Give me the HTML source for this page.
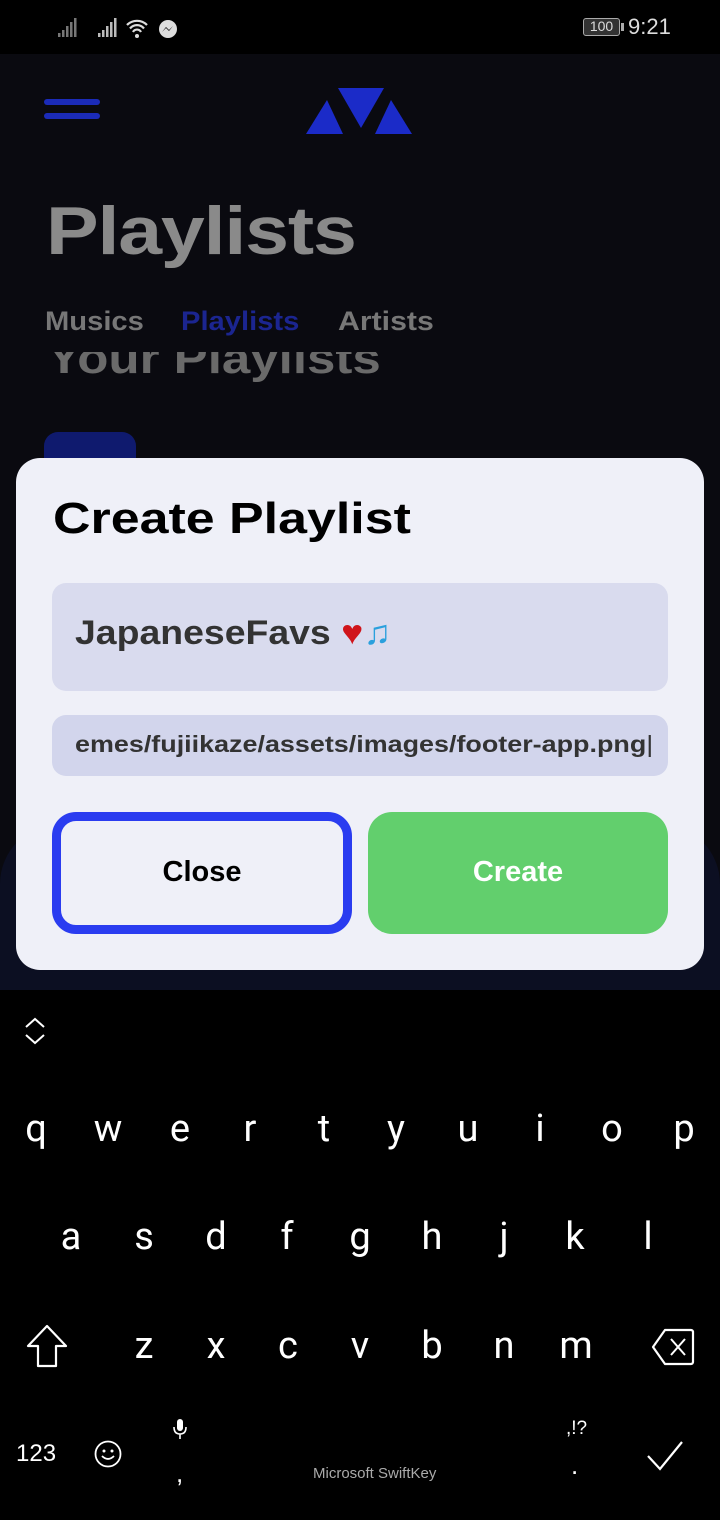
<!DOCTYPE html>
<html><head><meta charset="utf-8"><style>
*{margin:0;padding:0;box-sizing:border-box}
body{width:720px;height:1520px;background:#000;position:relative;overflow:hidden;font-family:"Liberation Sans",sans-serif}
.a{position:absolute}
.s{transform-origin:0 0;white-space:nowrap}
.app{left:0;top:54px;width:720px;height:936px;background:#0a0a10;overflow:hidden}
.k{position:absolute;color:#fff;font-size:38px;width:40px;text-align:center;font-family:"Roboto","Liberation Sans",sans-serif}
</style></head><body>
<div class="a" style="left:0;top:0;width:720px;height:54px;background:#000"></div>
<svg class="a" style="left:56px;top:16px" width="130" height="24" viewBox="0 0 130 24">
<g fill="#777"><rect x="2" y="17" width="2.5" height="4"/><rect x="6" y="14" width="2.5" height="7"/><rect x="10" y="10" width="2.5" height="11"/><rect x="14" y="6" width="2.5" height="15"/><rect x="18" y="2" width="2.5" height="19"/></g>
<g fill="#bbb"><rect x="42" y="17" width="2.5" height="4"/><rect x="46" y="14" width="2.5" height="7"/><rect x="50" y="10" width="2.5" height="11"/><rect x="54" y="6" width="2.5" height="15"/><rect x="58" y="2" width="2.5" height="19"/></g>
<g fill="none" stroke="#ddd" stroke-width="2.2"><path d="M71 9a14 14 0 0 1 20 0"/><path d="M74 12.5a9 9 0 0 1 14 0"/><path d="M77 16a4.5 4.5 0 0 1 8 0"/></g><circle cx="81" cy="20" r="2" fill="#ddd"/>
<circle cx="112" cy="13" r="9" fill="#ddd"/><path d="M106 16l4-5 3 3 4-4-4 5-3-3z" fill="#000"/>
</svg>
<div class="a" style="left:583px;top:18px;width:37px;height:18px;border:1.5px solid #aaa;border-radius:3px;background:#333;color:#ddd;font-size:14px;line-height:15px;text-align:center">100</div>
<div class="a" style="left:621px;top:23px;width:3px;height:8px;background:#aaa"></div>
<div class="a" style="left:628px;top:14px;color:#ddd;font-size:22px">9:21</div>

<div class="a app">
 <div class="a" style="left:44px;top:45px;width:56px;height:6px;border-radius:3px;background:#1b2bb8"></div>
 <div class="a" style="left:44px;top:59px;width:56px;height:6px;border-radius:3px;background:#1b2bb8"></div>
 <svg class="a" style="left:306px;top:32px" width="106" height="48" viewBox="0 0 106 48">
  <path d="M0 48L21 14 37 48z" fill="#1b2bc8"/><path d="M32 2h46L55 42z" fill="#1b2bc8"/><path d="M85 14L106 48 69 48z" fill="#1b2bc8"/>
 </svg>
 <div class="a s" style="left:46px;top:138px;font-size:68px;font-weight:bold;color:#8a8a8a;letter-spacing:-1px;transform:scaleX(1.16)">Playlists</div>
 <div class="a s" style="left:45px;top:252px;font-size:27px;font-weight:bold;color:#777;transform:scaleX(1.08)">Musics</div>
 <div class="a s" style="left:181px;top:252px;font-size:27px;font-weight:bold;color:#1b2590;transform:scaleX(1.08)">Playlists</div>
 <div class="a s" style="left:338px;top:252px;font-size:27px;font-weight:bold;color:#777;transform:scaleX(1.12)">Artists</div>
 <div class="a" style="left:0;top:298px;width:720px;height:48px;overflow:hidden"><div class="a s" style="left:47px;top:-18px;font-size:44px;font-weight:bold;color:#6a6a6a;transform:scaleX(1.16)">Your Playlists</div></div>
 <div class="a" style="left:44px;top:378px;width:92px;height:60px;border-radius:14px;background:#0f1a6e"></div>
 <div class="a" style="left:0;top:770px;width:720px;height:170px;border-radius:60px 60px 0 0;background:#0c0f22"></div>
</div>

<div class="a" style="left:16px;top:458px;width:688px;height:512px;background:#eff0f8;border-radius:24px"></div>
<div class="a s" style="left:53px;top:494px;font-size:44px;font-weight:bold;color:#000;transform:scaleX(1.18)">Create Playlist</div>
<div class="a" style="left:52px;top:583px;width:616px;height:108px;background:#d9dbee;border-radius:14px"></div>
<div class="a s" style="left:75px;top:614px;font-size:34px;font-weight:bold;color:#333;transform:scaleX(1.1)">JapaneseFavs <span style="color:#d0141a">♥</span><span style="color:#2aa0dd">♫</span></div>
<div class="a" style="left:52px;top:715px;width:616px;height:61px;background:#d2d5ec;border-radius:14px;overflow:hidden">
 <div class="a s" style="left:23px;top:16px;font-size:23px;font-weight:bold;color:#333;transform:scaleX(1.17)">emes/fujiikaze/assets/images/footer-app.png<span style="font-weight:normal">|</span></div>
</div>
<div class="a" style="left:52px;top:812px;width:300px;height:122px;border:9px solid #2a3cf0;border-radius:24px;background:#eff0f8"></div>
<div class="a" style="left:52px;top:856px;width:300px;text-align:center;font-size:29px;font-weight:bold;color:#000">Close</div>
<div class="a" style="left:368px;top:812px;width:300px;height:122px;border-radius:24px;background:#62cf6d"></div>
<div class="a" style="left:368px;top:856px;width:300px;text-align:center;font-size:29px;font-weight:bold;color:#fff">Create</div>

<svg class="a" style="left:24px;top:1017px" width="22" height="28" viewBox="0 0 22 28"><path d="M2 10l9-8 9 8M2 18l9 8 9-8" fill="none" stroke="#fff" stroke-width="2"/></svg>
<div class="k" style="left:16px;top:1107px">q</div><div class="k" style="left:88px;top:1107px">w</div><div class="k" style="left:160px;top:1107px">e</div><div class="k" style="left:230px;top:1107px">r</div><div class="k" style="left:304px;top:1107px">t</div><div class="k" style="left:376px;top:1107px">y</div><div class="k" style="left:448px;top:1107px">u</div><div class="k" style="left:520px;top:1107px">i</div><div class="k" style="left:592px;top:1107px">o</div><div class="k" style="left:664px;top:1107px">p</div>
<div class="k" style="left:51px;top:1215px">a</div><div class="k" style="left:124px;top:1215px">s</div><div class="k" style="left:196px;top:1215px">d</div><div class="k" style="left:267px;top:1215px">f</div><div class="k" style="left:340px;top:1215px">g</div><div class="k" style="left:412px;top:1215px">h</div><div class="k" style="left:484px;top:1215px">j</div><div class="k" style="left:555px;top:1215px">k</div><div class="k" style="left:628px;top:1215px">l</div>
<div class="k" style="left:124px;top:1324px">z</div><div class="k" style="left:196px;top:1324px">x</div><div class="k" style="left:268px;top:1324px">c</div><div class="k" style="left:340px;top:1324px">v</div><div class="k" style="left:412px;top:1324px">b</div><div class="k" style="left:484px;top:1324px">n</div><div class="k" style="left:556px;top:1324px">m</div>
<svg class="a" style="left:26px;top:1324px" width="42" height="44" viewBox="0 0 42 44"><path d="M21 2L2 22h10v20h18V22h10z" fill="none" stroke="#fff" stroke-width="2.2" stroke-linejoin="round"/></svg>
<svg class="a" style="left:651px;top:1328px" width="44" height="38" viewBox="0 0 44 38"><path d="M14 2h26a2 2 0 0 1 2 2v30a2 2 0 0 1-2 2H14L2 19z" fill="none" stroke="#fff" stroke-width="2.2" stroke-linejoin="round"/><path d="M20 11l14 16M34 11L20 27" stroke="#fff" stroke-width="2"/></svg>
<div class="a" style="left:16px;top:1440px;color:#fff;font-size:24px">123</div>
<svg class="a" style="left:94px;top:1440px" width="28" height="28" viewBox="0 0 28 28"><circle cx="14" cy="14" r="12.5" fill="none" stroke="#fff" stroke-width="1.8"/><circle cx="10" cy="11" r="1.5" fill="#fff"/><circle cx="18" cy="11" r="1.5" fill="#fff"/><path d="M8 16q6 6 12 0" fill="none" stroke="#fff" stroke-width="1.8"/></svg>
<svg class="a" style="left:172px;top:1418px" width="16" height="24" viewBox="0 0 16 24"><rect x="5" y="1" width="6" height="12" rx="3" fill="#fff"/><path d="M2 9q0 7 6 7t6-7M8 16v5" fill="none" stroke="#fff" stroke-width="1.6"/></svg>
<div class="a" style="left:176px;top:1458px;color:#fff;font-size:26px">,</div>
<div class="a" style="left:313px;top:1465px;color:#aaa;font-size:15px">Microsoft SwiftKey</div>
<div class="a" style="left:566px;top:1418px;color:#fff;font-size:19px">,!?</div>
<div class="a" style="left:571px;top:1450px;color:#fff;font-size:26px">.</div>
<svg class="a" style="left:646px;top:1440px" width="38" height="32" viewBox="0 0 38 32"><path d="M2 16l12 13L36 2" fill="none" stroke="#fff" stroke-width="2.2"/></svg>
</body></html>
